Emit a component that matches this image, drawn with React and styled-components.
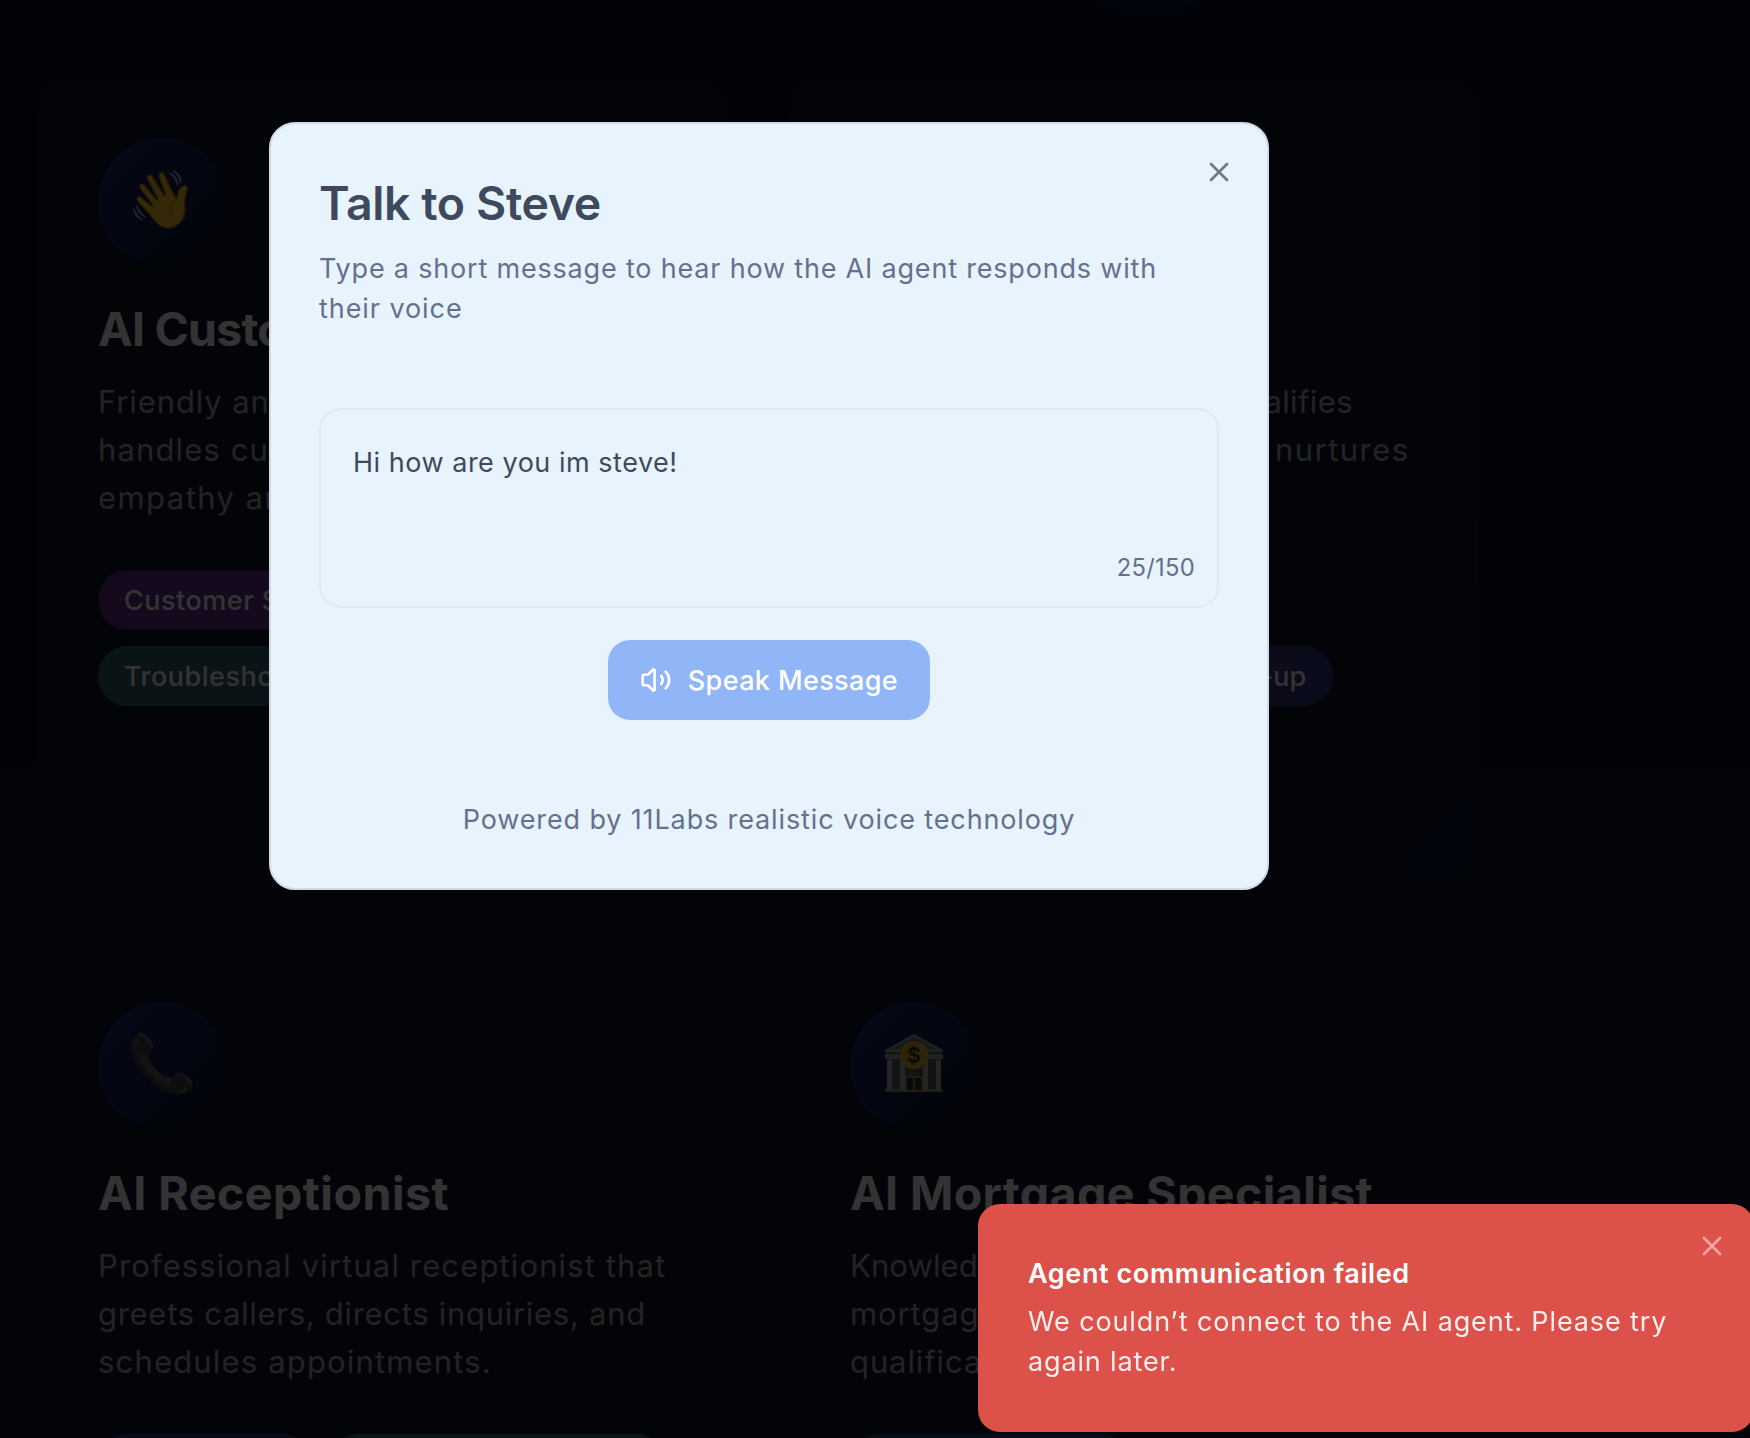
import React from "react";
import styled, { createGlobalStyle } from "styled-components";
import { Volume2, X } from "lucide-react";

const GlobalStyle = createGlobalStyle`
  * { box-sizing: border-box; }
  html, body { margin: 0; padding: 0; height: 1438px; overflow: hidden; background: #0a0a20; }
  body { font-family: Inter, "Liberation Sans", sans-serif; }
  h2, h3, p { margin: 0; }
  button { font-family: inherit; border: 0; padding: 0; background: none; }
`;

const Page = styled.main`
  height: 1438px;
  overflow: hidden;
  padding: 78px 0 0 38px;
  background:
    radial-gradient(ellipse 64px 16px at 1150px 0, #071a42 0, #071a42 60%, transparent 100%),
    linear-gradient(180deg, #0c0f28 0%, #0b0e2a 45%, #101428 58%, #0f1428 100%);
`;

const Grid = styled.section`
  display: grid;
  grid-template-columns: 688px 688px;
  grid-auto-rows: 800px;
  gap: 64px;
`;

const Card = styled.article`
  position: relative;
  overflow: hidden;
  padding: 60px;
  border-radius: 32px;
  background: linear-gradient(135deg, #111428, #12162a 45%, #151a28);

  ${(p) =>
    p.$accent &&
    `&::after {
      content: "";
      position: absolute;
      right: 4px;
      bottom: 4px;
      width: 72px;
      height: 86px;
      border-bottom-right-radius: 8px;
      background: linear-gradient(to bottom right, transparent 50%, #07153c 50%);
    }`}
`;

const Avatar = styled.div`
  display: flex;
  align-items: center;
  justify-content: center;
  width: 128px;
  height: 128px;
  padding-bottom: 7px;
  border-radius: 50%;
  font-size: 56px;
  line-height: 1;
  background: linear-gradient(135deg, #1e3474 0%, #181f62 30%, #101d4c 60%, #13172a 92%);
`;

const CardTitle = styled.h3`
  margin-top: 35px;
  font-size: 46.5px;
  line-height: 56px;
  font-weight: 700;
  white-space: nowrap;
  letter-spacing: ${(p) => p.$spacing}px;
  color: #fff;
`;

const CardText = styled.p`
  margin-top: 21px;
  height: 144px;
  font-size: 31px;
  line-height: 48px;
  color: #acaeb8;
`;

const Line = styled.span`
  display: block;
  white-space: nowrap;
  letter-spacing: ${(p) => p.$spacing}px;
  word-spacing: ${(p) => p.$words || 0}px;
`;

const Tags = styled.div`
  display: flex;
  flex-wrap: wrap;
  gap: 16px;
  margin-top: 48px;
`;

const tones = {
  purple: { fill: "#643090", edge: "#49347f" },
  teal: { fill: "#335e70", edge: "#2e637a" },
  indigo: { fill: "#363a82", edge: "#333e84" },
  violet: { fill: "linear-gradient(90deg, #643090, #50307f 60%, #363a82 80%)", edge: "#333e84" },
  blue: { fill: "#26396c", edge: "#24406e" },
};

const Tag = styled.span`
  display: flex;
  align-items: center;
  height: 60px;
  width: ${(p) => p.$width}px;
  padding: 0 24px;
  border: 2px solid ${(p) => tones[p.$tone].edge};
  border-radius: 30px;
  background: ${(p) => tones[p.$tone].fill};
  font-size: 27px;
  font-weight: 500;
  letter-spacing: ${(p) => p.$spacing ?? 0.5}px;
  white-space: nowrap;
  color: #fff;
`;

const Backdrop = styled.div`
  position: fixed;
  inset: 0;
  background: rgba(0, 0, 0, 0.8);
`;

const Dialog = styled.div`
  position: fixed;
  left: 269px;
  top: 122px;
  width: 1000px;
  height: 768px;
  padding: 51px 48px 48px;
  border: 2px solid #d3dae6;
  border-radius: 26px;
  background: #e7f4fe;
`;

const DialogTitle = styled.h2`
  font-size: 46.5px;
  line-height: 56px;
  font-weight: 600;
  letter-spacing: -0.41px;
  color: #3f495d;
`;

const DialogText = styled.p`
  margin-top: 18px;
  font-size: 27px;
  line-height: 40px;
  color: #64708d;
`;

const MessageBox = styled.div`
  position: relative;
  height: 200px;
  margin-top: 79px;
  padding: 33px 31px 31px 32px;
  border: 2px solid #e3e8ef;
  border-radius: 22px;
  font-size: 27px;
  line-height: 40px;
  letter-spacing: 0.52px;
  color: #3f495d;
`;

const Counter = styled.span`
  position: absolute;
  right: 22px;
  bottom: 22px;
  font-size: 23.8px;
  line-height: 32px;
  letter-spacing: 0.26px;
  color: #64708d;
`;

const SpeakButton = styled.button`
  display: flex;
  align-items: center;
  gap: 16px;
  width: 322px;
  height: 80px;
  margin: 32px auto 80px;
  padding: 0 32px;
  border-radius: 22px;
  background: #90b6f8;
  color: #fff;
  font-size: 27px;
  font-weight: 500;
  letter-spacing: 0.37px;
  white-space: nowrap;
`;

const Credit = styled.p`
  text-align: center;
  font-size: 27px;
  line-height: 40px;
  letter-spacing: 0.87px;
  color: #64708d;
`;

const CloseButton = styled.button`
  position: absolute;
  display: flex;
  top: ${(p) => p.$top}px;
  right: ${(p) => p.$right}px;
  color: ${(p) => p.$color};
`;

const Toast = styled.div`
  position: fixed;
  left: 978px;
  top: 1204px;
  width: 776px;
  height: 228px;
  padding: 50px;
  border-radius: 22px;
  background: #dc5149;
  color: #fff;
`;

const ToastTitle = styled.p`
  font-size: 27px;
  line-height: 40px;
  font-weight: 600;
  letter-spacing: 0.6px;
`;

const ToastText = styled.p`
  margin-top: 8px;
  font-size: 27px;
  line-height: 40px;
  opacity: 0.9;
`;

const Bank = () => (
  <svg width="60" height="60" viewBox="0 0 60 60">
    <path d="M1 17 30 1 59 17v9H1z" fill="#a2a8a8" />
    <path d="M7 16 30 4 53 16z" fill="#6f7676" />
    <path d="M1 19h58v2H1z" fill="#565d5d" />
    <path d="M3 26h54v32H3z" fill="#5d6667" />
    <path d="M1 56h58v3H1z" fill="#8b8f8f" />
    <path d="M3 27h5v30H3zM16 27h5v30h-5zM39 27h5v30h-5zM52 27h5v30h-5z" fill="#b9bbbb" />
    <path d="M22 44h16v14H22z" fill="#26343a" stroke="#c9a02e" strokeWidth="1.4" />
    <path d="M30 44v14" stroke="#c9a02e" strokeWidth="1.4" />
    <circle cx="30" cy="22" r="14" fill="#f0b238" />
    <circle cx="30" cy="22" r="12.2" fill="#d4b636" />
    <text x="30" y="29.5" textAnchor="middle" fontFamily="Inter, sans-serif" fontWeight="700" fontSize="21" fill="#473d14">
      $
    </text>
  </svg>
);

const cards = [
  {
    icon: "👋",
    title: ["AI Customer Support", -0.78],
    lines: [
      ["Friendly and helpful agent that", 0.89],
      ["handles customer questions with", 1.12],
      ["empathy and efficiency.", 1.43],
    ],
    tags: [
      ["Customer Service", "purple", 296],
      ["Troubleshooting", "teal", 262],
    ],
  },
  {
    icon: "💼",
    accent: true,
    title: ["AI Sales Agent", 0],
    lines: [
      ["Driven sales agent that qualifies", 0.38, 5.6],
      ["leads, books demos, and nurtures", 1.46, 3.8],
      ["prospects.", 1],
    ],
    tags: [
      ["Lead Qualification", "purple", 285],
      ["Sales", "teal", 112],
      ["Appointments", "teal", 285],
      ["Follow-up", "violet", 182, 0.1],
    ],
  },
  {
    icon: "📞",
    title: ["AI Receptionist", 0.5],
    lines: [
      ["Professional virtual receptionist that", 1.13],
      ["greets callers, directs inquiries, and", 0.71],
      ["schedules appointments.", 1.17],
    ],
    tags: [
      ["Call Routing", "indigo", 214],
      ["Appointment Setting", "teal", 338],
    ],
  },
  {
    icon: <Bank />,
    title: ["AI Mortgage Specialist", 0.4],
    lines: [
      ["Knowledgeable assistant for", 0.1],
      ["mortgage inquiries and", 0.9],
      ["qualification support.", 0.9],
    ],
    tags: [["Mortgage Expertise", "blue", 280]],
  },
];

export default function App() {
  return (
    <>
      <GlobalStyle />
      <Page>
        <Grid>
          {cards.map((card) => (
            <Card key={card.title[0]} $accent={card.accent}>
              <Avatar>{card.icon}</Avatar>
              <CardTitle $spacing={card.title[1]}>{card.title[0]}</CardTitle>
              <CardText>
                {card.lines.map(([text, spacing, words]) => (
                  <Line key={text} $spacing={spacing} $words={words}>
                    {text}
                  </Line>
                ))}
              </CardText>
              <Tags>
                {card.tags.map(([label, tone, width, spacing]) => (
                  <Tag key={label} $tone={tone} $width={width} $spacing={spacing}>
                    {label}
                  </Tag>
                ))}
              </Tags>
            </Card>
          ))}
        </Grid>
      </Page>
      <Backdrop />
      <Dialog role="dialog">
        <DialogTitle>Talk to Steve</DialogTitle>
        <DialogText>
          <Line $spacing={0.81}>Type a short message to hear how the AI agent responds with</Line>
          <Line $spacing={0.93}>their voice</Line>
        </DialogText>
        <MessageBox>
          Hi how are you im steve!
          <Counter>25/150</Counter>
        </MessageBox>
        <SpeakButton>
          <Volume2 size={32} />
          Speak Message
        </SpeakButton>
        <Credit>Powered by 11Labs realistic voice technology</Credit>
        <CloseButton $top={32} $right={32} $color="#707988">
          <X size={32} />
        </CloseButton>
      </Dialog>
      <Toast role="alert">
        <ToastTitle>Agent communication failed</ToastTitle>
        <ToastText>
          <Line $spacing={0.87}>We couldn’t connect to the AI agent. Please try</Line>
          <Line $spacing={0.85}>again later.</Line>
        </ToastText>
        <CloseButton $top={26} $right={26} $color="#f3a5a2">
          <X size={32} />
        </CloseButton>
      </Toast>
    </>
  );
}
